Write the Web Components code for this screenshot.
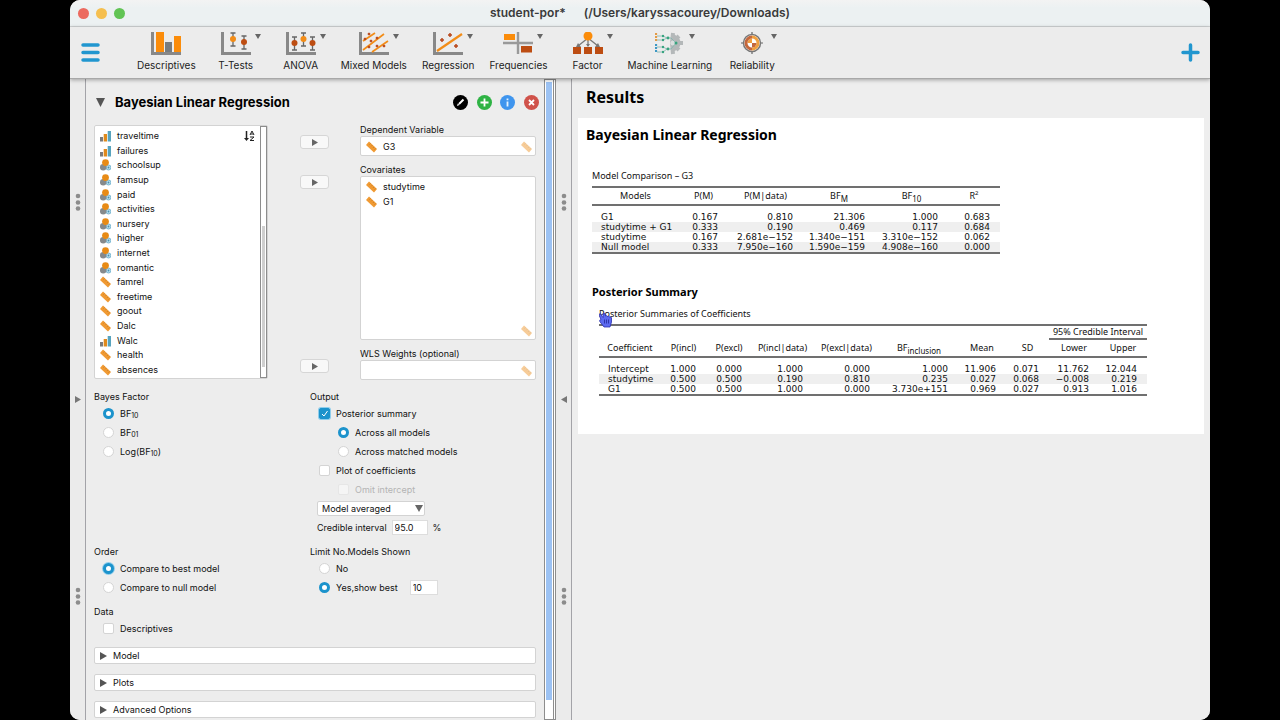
<!DOCTYPE html>
<html lang="en">
<head>
<meta charset="utf-8">
<title>student-por*</title>
<style>
  html, body { height: 100%; }
  body {
    margin: 0;
    background: #000;
    color: #111;
    font: 9px/14px Inter, "Liberation Sans", sans-serif;
    overflow: hidden;
  }
</style>
</head>
<body>
<jasp-window>
  <span slot="title">student-por*</span>
  <span slot="title">(/Users/karyssacourey/Downloads)</span>
  <jasp-ribbon slot="ribbon"></jasp-ribbon>
  <panel-divider slot="panels" arrow="▶"></panel-divider>
  <analysis-form slot="panels"></analysis-form>
  <panel-divider slot="panels" arrow="◀"></panel-divider>
  <results-view slot="panels"></results-view>
</jasp-window>

<script>
// Small base class: each element only has to return its markup
class BaseElement extends HTMLElement {
  constructor() {
    super();
    this.attachShadow({ mode: "open" });
  }
  connectedCallback() {
    this.shadowRoot.innerHTML = this.template();
  }
}

/* ---------- icons ---------- */

const AXES = `<path d="M1.5 0V21.5H30" fill="none" stroke="#888" stroke-width="3"/>`;

// dot with error bars
const whisker = (x, y, color) => `
  <path d="M${x} ${y - 6}V${y + 7}M${x - 2.5} ${y - 6}h5M${x - 2.5} ${y + 7}h5" stroke="#666" stroke-width="1.3" fill="none"/>
  <circle cx="${x}" cy="${y}" r="3" fill="${color}"/>`;

const plus = (x, y, r = 2) => `<path d="M${x - r} ${y}h${2 * r}M${x} ${y - r}v${2 * r}" stroke="#b8471b" stroke-width="1.5"/>`;

const RIBBON_ICONS = {
  descriptives: `${AXES}
    <path d="M5 0h8v20H5z" fill="#fb8c0a"/><path d="M14 10h7v10h-7z" fill="#777c80"/><path d="M23 4h7v16h-7z" fill="#fb8c0a"/>`,
  ttests: `${AXES}${whisker(12, 7, "#f28c17")}${whisker(23, 10, "#bd4d12")}`,
  anova: `${AXES}${whisker(8.5, 11, "#bd4d12")}${whisker(17.5, 7, "#f28c17")}${whisker(26.5, 11, "#bd4d12")}`,
  mixed: `${AXES}
    <path d="M4 9L16 1M4 18L25 2M13 20L29 9" stroke="#f28c17" stroke-width="1.700"/>
    ${plus(6, 7, 1.3)}${plus(10, 2, 1.3)}${plus(12, 9, 1.3)}${plus(18, 6, 1.3)}${plus(10, 15, 1.3)}${plus(18, 14, 1.3)}${plus(25, 14, 1.3)}`,
  regression: `${AXES}
    <path d="M4 19L29 2" stroke="#f28c17" stroke-width="2.2"/>
    ${plus(9, 8)}${plus(17, 3)}${plus(23, 14)}`,
  frequencies: `
    <path d="M0 11h30M15 0v22" stroke="#999" stroke-width="2.4"/>
    <path d="M1 2h11v6H1z" fill="#fb8c0a"/><path d="M18 14h11v6.500H18z" fill="#bd4d12"/>`,
  factor: `
    <path d="M15 6L5 14M15 6v8M15 6l10 8" stroke="#777" stroke-width="1.3"/>
    <path d="M5 11l-2 4h5zM13 12h4l-2 3zM25 11l2 4h-5z" fill="#777"/>
    <circle cx="15" cy="4" r="4.500" fill="#fb8c0a"/>
    <path d="M0 15h8v7H0zM11 15h8v7h-8zM22 15h8v7h-8z" fill="#bd4d12"/>`,
  ml: `
    <path d="M17 2.500a8.500 8.500 0 0 1 0 17z" fill="#b4b8b9"/>
    <path d="M17 11L18 1M17 11L24 4M17 11h11M17 11l7 7M17 11l1 11" stroke="#b4b8b9" stroke-width="4"/>
    <circle cx="18" cy="11" r="2.500" fill="#d9dede"/>
    <path d="M2 4h6l4 2M2 8h6l4-2M2 15h6l4 2M2 20h6l4-3M12 6h4l5 5-5 6h-4" fill="none" stroke="#7fb5ad" stroke-width=".8"/>
    <path d="M1 1v9" stroke="#e39a45" stroke-width="2.200" stroke-dasharray="2 1"/>
    <path d="M1 12v9" stroke="#3d98c4" stroke-width="2.200" stroke-dasharray="2 1"/>
    <g fill="#36a37e"><circle cx="8" cy="4" r="1.200"/><circle cx="8" cy="8" r="1.200"/><circle cx="8" cy="15" r="1.200"/><circle cx="8" cy="20" r="1.200"/>
    <circle cx="13" cy="6" r="1.400"/><circle cx="13" cy="17" r="1.400"/><circle cx="21" cy="11" r="1.500"/></g>`,
  reliability: `
    <path d="M15 0v22M4 11h22" stroke="#666" stroke-width="1.2"/>
    <circle cx="15" cy="11" r="8.500" fill="#fff" stroke="#777" stroke-width="1.500"/>
    <path d="M15 3.500a7.500 7.500 0 0 1 7.500 7.500h-3a4.500 4.500 0 0 0-4.500-4.500zM15 11h-4.500a4.500 4.500 0 0 1 4.500-4.500z" fill="#f0a040"/>
    <path d="M15 18.500a7.500 7.500 0 0 1-7.500-7.500h3a4.500 4.500 0 0 0 4.500 4.500zM15 3.500a7.500 7.500 0 0 0-7.500 7.500h3a4.500 4.500 0 0 1 4.500-4.500z" fill="#c4683d"/>
    <path d="M15 18.500a7.500 7.500 0 0 0 7.500-7.500h-3a4.500 4.500 0 0 1-4.500 4.500z" fill="#f0a040"/>
    <path d="M15 11h4.500a4.500 4.500 0 0 1-4.500 4.500z" fill="#c4683d"/>`,
};

const VARIABLE_ICONS = {
  scale: `<path d="M3 .5L11 8l-3 3.500L0 4z" fill="#f09a33"/>
    <path d="M4.500 2.500l-1 1M6.300 4.200l-1 1M8 5.900l-1 1M9.600 7.500l-1 1" stroke="#b9721e" stroke-width=".7"/>`,
  ordinal: `<path d="M0 7h3v4.500H0z" fill="#7b7b7b"/><path d="M3.700 4h3.300v7.500H3.700z" fill="#e08a1c"/><path d="M7.700 1H11v10.500H7.700z" fill="#57a3bd"/>`,
  nominal: `<circle cx="8.500" cy="8.500" r="2.500" fill="#b9dcea" stroke="#63aac9" stroke-width=".8"/><circle cx="8.500" cy="8.500" r=".9" fill="#4693b5"/>
    <circle cx="3.200" cy="8.300" r="3.200" fill="#868a8c"/><circle cx="5.500" cy="3.600" r="3.400" fill="#e88b15"/>`,
};

/* ---------- window frame ---------- */

class JaspWindow extends BaseElement {
  template() {
    return `
      <style>
        :host {
          display: flex;
          flex-direction: column;
          height: 100vh;
          margin: 0 70px;
          background: #ededed;
          border-radius: 10px;
          overflow: hidden;
        }
        header {
          display: grid;
          grid-template-columns: 1fr auto 1fr;
          align-items: center;
          height: 26px;
          flex: none;
          padding: 0 8px;
          background: linear-gradient(#f3f3f3, #ecf1f2 30%);
          border-bottom: 1px solid #d2d5d6;
        }
        .lights { display: flex; gap: 7px; }
        .lights i { width: 11px; height: 11px; border-radius: 50%; background: #ec6a5f; }
        .lights i:nth-child(2) { background: #f5bf4f; }
        .lights i:nth-child(3) { background: #61c454; }
        .title { display: flex; gap: 18px; font-size: 12px; font-weight: 600; color: #3a3a3a; }
        .panels { display: flex; flex: 1; min-height: 0; }
      </style>
      <header>
        <div class="lights"><i></i><i></i><i></i></div>
        <div class="title"><slot name="title"></slot></div>
      </header>
      <slot name="ribbon"></slot>
      <div class="panels"><slot name="panels"></slot></div>`;
  }
}

/* ---------- ribbon ---------- */

class RibbonButton extends BaseElement {
  template() {
    const arrow = this.hasAttribute("menu") ? `<b></b>` : "";
    return `
      <style>
        :host { display: block; }
        button {
          display: flex;
          flex-direction: column;
          align-items: center;
          gap: 3px;
          min-width: 50px;
          padding: 0;
          border: 0;
          background: none;
          color: #222;
          font: inherit;
          font-size: 10px;
        }
        .icon { position: relative; height: 23px; }
        svg { display: block; }
        b {
          position: absolute;
          left: 34px;
          top: 2px;
          border: 3px solid transparent;
          border-top: 5px solid #666;
          border-bottom: 0;
        }
      </style>
      <button>
        <span class="icon">
          <svg width="30" height="23" viewBox="0 0 30 23">${RIBBON_ICONS[this.getAttribute("icon")]}</svg>${arrow}
        </span>
        <slot></slot>
      </button>`;
  }
}

class JaspRibbon extends BaseElement {
  template() {
    return `
      <style>
        :host {
          display: flex;
          align-items: flex-start;
          flex: none;
          height: 52px;
          box-sizing: border-box;
          padding: 5px 10px 0 11px;
          background: #ececec;
          border-bottom: 1px solid #a8a8a8;
          box-shadow: 0 1px 4px #0005;
          z-index: 1;
        }
        nav { display: flex; gap: 15px; flex: 1; padding-left: 37px; }
        .tool { display: block; padding: 11px 0 0; border: 0; background: none; }
        .tool svg { display: block; }
      </style>
      <button class="tool" aria-label="Menu">
        <svg width="19" height="20" viewBox="0 0 19 20"><path d="M2 2h15M2 9.500h15M2 17h15" stroke="#2196cf" stroke-width="3.500" stroke-linecap="round"/></svg>
      </button>
      <nav>
        <ribbon-button icon="descriptives">Descriptives</ribbon-button>
        <ribbon-button icon="ttests" menu>T-Tests</ribbon-button>
        <ribbon-button icon="anova" menu>ANOVA</ribbon-button>
        <ribbon-button icon="mixed" menu>Mixed Models</ribbon-button>
        <ribbon-button icon="regression" menu>Regression</ribbon-button>
        <ribbon-button icon="frequencies" menu>Frequencies</ribbon-button>
        <ribbon-button icon="factor" menu>Factor</ribbon-button>
        <ribbon-button icon="ml" menu>Machine Learning</ribbon-button>
        <ribbon-button icon="reliability" menu>Reliability</ribbon-button>
      </nav>
      <button class="tool" aria-label="Modules">
        <svg width="19" height="19" viewBox="0 0 19 19"><path d="M2 9.500h15M9.500 2v15" stroke="#2196cf" stroke-width="3.500" stroke-linecap="round"/></svg>
      </button>`;
  }
}

/* ---------- drag handle between panels ---------- */

class PanelDivider extends BaseElement {
  template() {
    const dir = this.getAttribute("arrow") === "▶" ? "M0 0l6 3.500L0 7z" : "M6 0L0 3.500 6 7z";
    const dots = `<svg width="6" height="18" viewBox="0 0 6 18" fill="#8c8c8c"><circle cx="3" cy="3" r="2.300"/><circle cx="3" cy="9.500" r="2.300"/><circle cx="3" cy="15.500" r="2.300"/></svg>`;
    return `
      <style>
        :host {
          display: flex;
          flex-direction: column;
          align-items: center;
          justify-content: space-between;
          flex: none;
          width: 16px;
          box-sizing: border-box;
          padding: 114px 0 115px;
          border-right: 1px solid #a3a3a8;
          background: #ebebeb;
        }
      </style>
      ${dots}
      <svg width="6" height="7" viewBox="0 0 6 7"><path d="${dir}" fill="#777"/></svg>
      ${dots}`;
  }
}

/* ---------- variable lists ---------- */

class VariableItem extends BaseElement {
  template() {
    return `
      <style>
        :host { display: flex; align-items: center; gap: 6px; min-height: 0; }
        svg { flex: none; }
      </style>
      <svg width="11" height="12" viewBox="0 0 11 12">${VARIABLE_ICONS[this.getAttribute("type")]}</svg>
      <span><slot></slot></span>`;
  }
}

class AssignField extends BaseElement {
  template() {
    return `
      <style>
        :host { display: flex; align-items: flex-start; justify-content: space-between; }
        button {
          display: grid;
          place-items: center;
          width: 29px;
          height: 14px;
          margin: 12px 0 0 32px;
          padding: 0;
          border: 1px solid #d6d6d6;
          border-radius: 3px;
          background: #f8f8f8;
        }
        .field { width: 176px; line-height: 13px; }
        .box {
          display: flex;
          justify-content: space-between;
          height: var(--box-height, 20px);
          box-sizing: border-box;
          padding: 2px 3px 2px 5px;
          border: 1px solid #d3d3d3;
          border-radius: 2px;
          background: #fff;
        }
        .items { display: grid; grid-auto-rows: 15px; }
        .hint { align-self: flex-end; opacity: .5; }
      </style>
      <button aria-label="Assign"><svg width="7" height="7" viewBox="0 0 7 7"><path d="M1 0l6 3.500L1 7z" fill="#666"/></svg></button>
      <div class="field">
        <div>${this.getAttribute("label")}</div>
        <div class="box">
          <div class="items"><slot></slot></div>
          <svg class="hint" width="11" height="12" viewBox="0 0 11 12">${VARIABLE_ICONS.scale}</svg>
        </div>
      </div>`;
  }
}

const VARIABLES = [
  ["traveltime", "ordinal"], ["failures", "ordinal"],
  ["schoolsup", "nominal"], ["famsup", "nominal"], ["paid", "nominal"], ["activities", "nominal"],
  ["nursery", "nominal"], ["higher", "nominal"], ["internet", "nominal"], ["romantic", "nominal"],
  ["famrel", "scale"], ["freetime", "scale"], ["goout", "scale"], ["Dalc", "scale"],
  ["Walc", "ordinal"], ["health", "scale"], ["absences", "scale"],
];

class VariableList extends BaseElement {
  template() {
    const items = VARIABLES.map(
      ([name, type]) => `<variable-item type="${type}">${name}</variable-item>`
    ).join("");
    return `
      <style>
        :host {
          display: flex;
          width: 174px;
          box-sizing: border-box;
          border: 1px solid #d3d3d3;
          border-radius: 2px;
          background: #fff;
        }
        .items { display: grid; grid-auto-rows: 1fr; flex: 1; padding: 3px 0 1px 5px; }
        button { align-self: flex-start; margin: 4px 5px 0 0; padding: 0; border: 0; background: none; }
        svg { display: block; }
        .bar { display: flex; width: 7px; box-sizing: border-box; border: 1px solid #8d8d8d; }
        .thumb { flex: 1; margin: 99px 1px 10px; background: #cfcfcf; }
      </style>
      <div class="items">${items}</div>
      <button aria-label="Sort">
        <svg width="11" height="12" viewBox="0 0 11 12">
          <path d="M2.500 1v8" stroke="#222" stroke-width="1.500"/><path d="M0 8h5L2.500 11z" fill="#222"/>
          <path d="M6 5l2-4 2 4M6.600 4h2.800M6 7h4L6 10.500h4" fill="none" stroke="#222"/>
        </svg>
      </button>
      <div class="bar"><div class="thumb"></div></div>`;
  }
}

/* ---------- analysis form ---------- */

class FormSection extends BaseElement {
  template() {
    return `
      <style>
        :host { display: block; }
        button {
          display: flex;
          align-items: center;
          gap: 6px;
          width: 100%;
          height: 17px;
          box-sizing: border-box;
          padding: 0 5px;
          border: 1px solid #d3d3d3;
          border-radius: 2px;
          background: #fff;
          color: inherit;
          font: inherit;
        }
      </style>
      <button aria-expanded="false">
        <svg width="7" height="8" viewBox="0 0 7 8"><path d="M0 0l7 4-7 4z" fill="#555"/></svg>
        <slot></slot>
      </button>`;
  }
}

class AnalysisForm extends BaseElement {
  template() {
    return `
      <style>
        :host { display: flex; flex: none; width: 470px; }
        form { flex: 1; min-width: 0; padding: 13px 8px 0; overflow: hidden; }
        svg { display: block; }
        .heading { display: flex; align-items: center; height: 20px; margin-right: -3px; }
        .heading h2 { flex: 1; margin: 0 0 0 9px; font-size: 13px; line-height: 18px; font-weight: 700; color: #000; }
        .tools { display: flex; justify-content: space-between; width: 86px; }
        .tools button { padding: 0; border: 0; background: none; }

        .assign { display: flex; margin-top: 11px; }
        variable-list { margin: 2px 0 1px; }
        .fields { display: flex; flex-direction: column; gap: 7px; flex: 1; }
        .fields .tall { --box-height: 164px; }

        .options { display: grid; grid-template-columns: 216px 1fr; gap: 7px 0; margin: 9px 0; }
        fieldset { min-width: 0; margin: 0; padding: 0; border: 0; }
        legend { padding: 0; line-height: 15px; }
        .row { display: flex; align-items: center; gap: 6px; height: 19px; padding-left: 9px; }
        .nested { padding-left: 28px; }
        .plain { padding-left: 7px; gap: 5px; }
        .row label { display: flex; align-items: center; gap: 6px; }
        .off { color: #b4b4b4; }
        sub { font-size: 7px; line-height: 0; vertical-align: -1px; }

        input, select { box-sizing: border-box; margin: 0; font: inherit; color: inherit; }
        input[type="radio"], input[type="checkbox"] {
          appearance: none;
          flex: none;
          width: 11px;
          height: 11px;
          border: 1px solid #d4d4d4;
          background: #fff;
        }
        input[type="radio"] { border-radius: 50%; }
        input[type="checkbox"] { border-radius: 2px; }
        input[type="radio"]:checked { border: 3px solid #1c93cc; }
        input[type="radio"].focused { box-shadow: 0 0 0 1px #8fcdeb; }
        input[type="checkbox"]:checked {
          border-color: #1c93cc;
          background: #1c93cc url('data:image/svg+xml,<svg xmlns="http://www.w3.org/2000/svg" viewBox="0 0 9 9"><path d="M2 5l2 2 3.500-5" fill="none" stroke="white"/></svg>');
          box-shadow: 0 0 0 1px #8fcdeb;
        }
        input:disabled { border-color: #e6e6e6; background: #f5f5f5; }
        input[type="text"] { width: 36px; height: 15px; padding: 0 2px; border: 1px solid #ddd; background: #fff; }
        input.short { width: 28px; margin-left: 6px; }
        .select { position: relative; display: block; }
        .select svg { position: absolute; right: 2px; top: 4px; pointer-events: none; }
        select {
          appearance: none;
          display: block;
          width: 108px;
          height: 15px;
          padding: 0 4px;
          border: 1px solid #d3d3d3;
          border-radius: 2px;
          background: #fff;
          line-height: 13px;
        }
        .sections { display: flex; flex-direction: column; gap: 10px; }
        .scroll {
          flex: none;
          display: flex;
          width: 12px;
          box-sizing: border-box;
          padding: 2px 1px 19px;
          border: 1px solid #8d8d8d;
          border-right: 3px double #8d8d8d;
          background: #fff;
        }
        .scroll div { flex: 1; background: #9cc2f3; }
      </style>
      <form>
        <div class="heading">
          <svg width="12" height="9" viewBox="0 0 12 9"><path d="M2 0h9L6.500 9z" fill="#555"/></svg>
          <h2>Bayesian Linear Regression</h2>
          <div class="tools">
            <button type="button" aria-label="Edit title"><svg width="15" height="15" viewBox="0 0 15 15"><circle cx="7.500" cy="7.500" r="7.500" fill="#000"/><path d="M6 9l4.500-4.500" stroke="#fff" stroke-width="2"/><path d="M4 11l.8-2.500L6.500 10z" fill="#fff"/></svg></button>
            <button type="button" aria-label="Duplicate"><svg width="15" height="15" viewBox="0 0 15 15"><circle cx="7.500" cy="7.500" r="7.500" fill="#2eb344"/><path d="M3.500 7.500h8M7.500 3.500v8" stroke="#fff" stroke-width="1.800"/></svg></button>
            <button type="button" aria-label="Info"><svg width="15" height="15" viewBox="0 0 15 15"><circle cx="7.500" cy="7.500" r="7.500" fill="#3f95ee"/><path d="M7.500 6.500v5M7.500 3.500v1.800" stroke="#e4f2ff" stroke-width="1.800"/></svg></button>
            <button type="button" aria-label="Remove"><svg width="15" height="15" viewBox="0 0 15 15"><circle cx="7.500" cy="7.500" r="7.500" fill="#d0524a"/><path d="M5 5l5 5M10 5l-5 5" stroke="#fff" stroke-width="1.800"/></svg></button>
          </div>
        </div>

        <div class="assign">
          <variable-list></variable-list>
          <div class="fields">
            <assign-field label="Dependent Variable"><variable-item type="scale">G3</variable-item></assign-field>
            <assign-field class="tall" label="Covariates">
              <variable-item type="scale">studytime</variable-item>
              <variable-item type="scale">G1</variable-item>
            </assign-field>
            <assign-field label="WLS Weights (optional)"></assign-field>
          </div>
        </div>

        <div class="options">
          <fieldset>
            <legend>Bayes Factor</legend>
            <div class="row"><label><input type="radio" name="bf" checked><span>BF<sub>10</sub></span></label></div>
            <div class="row"><label><input type="radio" name="bf"><span>BF<sub>01</sub></span></label></div>
            <div class="row"><label><input type="radio" name="bf"><span>Log(BF<sub>10</sub>)</span></label></div>
          </fieldset>
          <fieldset>
            <legend>Output</legend>
            <div class="row"><label><input type="checkbox" checked>Posterior summary</label></div>
            <div class="row nested"><label><input type="radio" name="across" checked>Across all models</label></div>
            <div class="row nested"><label><input type="radio" name="across">Across matched models</label></div>
            <div class="row"><label><input type="checkbox">Plot of coefficients</label></div>
            <div class="row nested off"><label><input type="checkbox" disabled>Omit intercept</label></div>
            <div class="row plain">
              <span class="select">
                <select aria-label="Coefficients"><option>Model averaged</option></select>
                <svg width="8" height="7" viewBox="0 0 8 7"><path d="M0 0h8L4 7z" fill="#666"/></svg>
              </span>
            </div>
            <div class="row plain">
              <label for="ci">Credible interval</label><input type="text" id="ci" value="95.0">%
            </div>
          </fieldset>
          <fieldset>
            <legend>Order</legend>
            <div class="row"><label><input type="radio" name="order" class="focused" checked>Compare to best model</label></div>
            <div class="row"><label><input type="radio" name="order">Compare to null model</label></div>
          </fieldset>
          <fieldset>
            <legend>Limit No.Models Shown</legend>
            <div class="row"><label><input type="radio" name="limit">No</label></div>
            <div class="row"><label><input type="radio" name="limit" checked>Yes,show best</label><input type="text" class="short" aria-label="Number of models" value="10"></div>
          </fieldset>
          <fieldset>
            <legend>Data</legend>
            <div class="row"><label><input type="checkbox">Descriptives</label></div>
          </fieldset>
        </div>

        <div class="sections">
          <form-section>Model</form-section>
          <form-section>Plots</form-section>
          <form-section>Advanced Options</form-section>
        </div>
      </form>
      <div class="scroll"><div></div></div>`;
  }
}

/* ---------- results ---------- */

const TABLES = {
  comparison: {
    caption: "Model Comparison – G3",
    widths: [87, 49, 75, 72, 73, 52],
    head: ["Models", "P(M)", "P(M|data)", "BF<sub>M</sub>", "BF<sub>10</sub>", "R<sup>2</sup>"],
    rows: [
      ["G1", "0.167", "0.810", "21.306", "1.000", "0.683"],
      ["studytime + G1", "0.333", "0.190", "0.469", "0.117", "0.684"],
      ["studytime", "0.167", "2.681e−152", "1.340e−151", "3.310e−152", "0.062"],
      ["Null model", "0.333", "7.950e−160", "1.590e−159", "4.908e−160", "0.000"],
    ],
  },
  posterior: {
    caption: "Posterior Summaries of Coefficients",
    widths: [62, 45, 46, 61, 67, 78, 48, 43, 50, 48],
    span: { label: "95% Credible Interval", cols: 2 },
    head: ["Coefficient", "P(incl)", "P(excl)", "P(incl|data)", "P(excl|data)", "BF<sub>inclusion</sub>", "Mean", "SD", "Lower", "Upper"],
    rows: [
      ["Intercept", "1.000", "0.000", "1.000", "0.000", "1.000", "11.906", "0.071", "11.762", "12.044"],
      ["studytime", "0.500", "0.500", "0.190", "0.810", "0.235", "0.027", "0.068", "−0.008", "0.219"],
      ["G1", "0.500", "0.500", "1.000", "0.000", "3.730e+151", "0.969", "0.027", "0.913", "1.016"],
    ],
  },
};

class ResultTable extends BaseElement {
  template() {
    const { caption, widths, span, head, rows } = TABLES[this.getAttribute("data")];
    const cols = widths.map((w) => `<col style="width:${w}px">`).join("");
    const total = widths.reduce((a, b) => a + b, 0);
    const spanRow = span
      ? `<tr class="span"><td colspan="${head.length - span.cols}"></td><th colspan="${span.cols}">${span.label}</th></tr>`
      : "";
    const body = rows
      .map(([name, ...vals]) => `<tr><th scope="row">${name}</th>${vals.map((v) => `<td>${v}</td>`).join("")}</tr>`)
      .join("");
    return `
      <style>
        :host { display: block; }
        table {
          width: ${total}px;
          table-layout: fixed;
          border-collapse: collapse;
          border-bottom: 2px solid #707070;
          font-size: 9px;
          line-height: 10px;
          white-space: nowrap;
        }
        caption { height: 14px; padding-bottom: 3px; text-align: left; line-height: 14px; }
        th { padding: 0; font-weight: 400; }
        thead { border-top: 2px solid #707070; border-bottom: 2px solid #707070; }
        thead th { height: 16px; }
        .span th { height: 12px; border-bottom: 2px solid #707070; }
        .span td { padding: 0; }
        tbody { font-family: "DejaVu Sans", sans-serif; }
        tbody th { padding-left: 9px; text-align: left; }
        tbody td { padding: 0 10px 0 0; text-align: right; }
        tbody tr:nth-child(even) { background: #efefef; }
        tbody tr:first-child > * { padding-top: 6px; }
        sub { font-size: 8px; line-height: 0; vertical-align: -3px; }
        sup { font-size: 6px; line-height: 0; }
      </style>
      <table>
        <caption>${caption}<slot></slot></caption>
        <colgroup>${cols}</colgroup>
        <thead>${spanRow}<tr>${head.map((h) => `<th scope="col">${h}</th>`).join("")}</tr></thead>
        <tbody>${body}</tbody>
      </table>`;
  }
}

class ResultsView extends BaseElement {
  template() {
    return `
      <style>
        :host {
          display: block;
          flex: 1;
          min-width: 0;
          padding: 8px 6px 0;
          background: #eee;
          color: #111;
          font-family: "Noto Sans", "Open Sans", sans-serif;
        }
        h1, h2, h3 { margin: 0; font-weight: 700; color: #000; }
        h1 { padding: 0 8px; font-size: 16px; line-height: 20px; }
        article { margin-top: 11px; padding: 7px 8px 38px; background: #fff; }
        h2 { font-size: 14px; line-height: 20px; }
        section { padding: 24px 6px 0; }
        h3 { font-size: 11px; line-height: 16px; }
        .posterior { padding-top: 30px; }
        .posterior result-table { position: relative; margin: 7px 0 0 7px; }
        .cursor { position: absolute; left: 0; top: 5px; }
      </style>
      <h1>Results</h1>
      <article>
        <h2>Bayesian Linear Regression</h2>
        <section><result-table data="comparison"></result-table></section>
        <section class="posterior">
          <h3>Posterior Summary</h3>
          <result-table data="posterior">
            <svg class="cursor" width="14" height="16" viewBox="0 0 14 16">
              <path d="M1 1.500l3 4V1.500q1-1 1.800 0L6.500 4q1.200-.8 2 .3 1.200-.6 2 .5 1.800-.3 2 1.200v4L11 15H5L.8 9.500Q0 7.800 2 7.500L0 3z" fill="#5d6bf0" stroke="#2a2fb0" stroke-width=".8"/>
              <path d="M5.500 7.500v4M7.500 7.500v4M9.500 7.500v4" stroke="#23289a" stroke-width=".8"/>
            </svg>
          </result-table>
        </section>
      </article>`;
  }
}

customElements.define("jasp-window", JaspWindow);
customElements.define("ribbon-button", RibbonButton);
customElements.define("jasp-ribbon", JaspRibbon);
customElements.define("panel-divider", PanelDivider);
customElements.define("variable-item", VariableItem);
customElements.define("assign-field", AssignField);
customElements.define("variable-list", VariableList);
customElements.define("form-section", FormSection);
customElements.define("analysis-form", AnalysisForm);
customElements.define("result-table", ResultTable);
customElements.define("results-view", ResultsView);
</script>
</body>
</html>
